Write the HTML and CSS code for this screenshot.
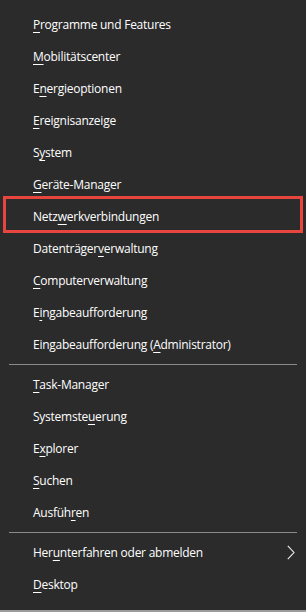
FILE: index.html
```html
<!DOCTYPE html>
<html lang="de">
<head>
<meta charset="utf-8">
<title>Win+X Menü</title>
<link rel="stylesheet" href="styles.css">
</head>
<body>
<div class="menu">
  <ul class="group">
    <li class="item"><span class="label"><u>P</u>rogramme und Features</span></li>
    <li class="item"><span class="label"><u>M</u>obilitätscenter</span></li>
    <li class="item"><span class="label">E<u>n</u>ergieoptionen</span></li>
    <li class="item"><span class="label"><u>E</u>reignisanzeige</span></li>
    <li class="item"><span class="label">S<u>y</u>stem</span></li>
    <li class="item"><span class="label"><u>G</u>eräte-Manager</span></li>
    <li class="item item-marked"><span class="label">Netz<u>w</u>erkverbindungen</span><span class="mark"></span></li>
    <li class="item"><span class="label">Datenträger<u>v</u>erwaltung</span></li>
    <li class="item"><span class="label"><u>C</u>omputerverwaltung</span></li>
    <li class="item"><span class="label">E<u>i</u>ngabeaufforderung</span></li>
    <li class="item"><span class="label">Eingabeaufforderung (<u>A</u>dministrator)</span></li>
  </ul>
  <div class="sep"></div>
  <ul class="group">
    <li class="item"><span class="label"><u>T</u>ask-Manager</span></li>
    <li class="item"><span class="label">Systemste<u>u</u>erung</span></li>
    <li class="item"><span class="label">E<u>x</u>plorer</span></li>
    <li class="item"><span class="label"><u>S</u>uchen</span></li>
    <li class="item"><span class="label">Ausfüh<u>r</u>en</span></li>
  </ul>
  <div class="sep"></div>
  <ul class="group">
    <li class="item item-sub"><span class="label">Her<u>u</u>nterfahren oder abmelden</span>
      <svg class="chevron" width="8" height="15" viewBox="0 0 8 15"><polyline points="0.8,0.8 7,7.5 0.8,14.2" fill="none" stroke="#f2f2f2" stroke-width="1.1"/></svg>
    </li>
    <li class="item"><span class="label"><u>D</u>esktop</span></li>
  </ul>
</div>
<div class="edge"></div>
</body>
</html>
```
FILE: styles.css
```css
html, body {
  margin: 0;
  padding: 0;
  background: #2b2b2b;
}
body {
  width: 306px;
  height: 612px;
  overflow: hidden;
  display: flex;
  flex-direction: column;
  font-family: "Open Sans", "Noto Sans", "Liberation Sans", sans-serif;
  font-size: 12px;
  letter-spacing: -0.25px;
  color: #ffffff;
}
.menu {
  flex: 1;
  padding-top: 8px;
}
.group {
  list-style: none;
  margin: 0;
  padding: 0;
}
.item {
  position: relative;
  height: 32px;
  display: flex;
  align-items: center;
  padding-left: 33px;
  padding-right: 11px;
}
.label {
  white-space: nowrap;
  flex: 1;
}
.label u {
  text-decoration-thickness: 1px;
  text-underline-offset: 3px;
}
.sep {
  height: 1px;
  background: #8a8a8a;
  margin: 4px 9px 3px 9px;
}
.chevron {
  display: block;
  flex: none;
}
.mark {
  position: absolute;
  left: 3px;
  right: 3px;
  top: -4px;
  bottom: -1px;
  border: 3px solid #e8453f;
}
.edge {
  height: 2px;
  background: #9c9c9c;
}
```
